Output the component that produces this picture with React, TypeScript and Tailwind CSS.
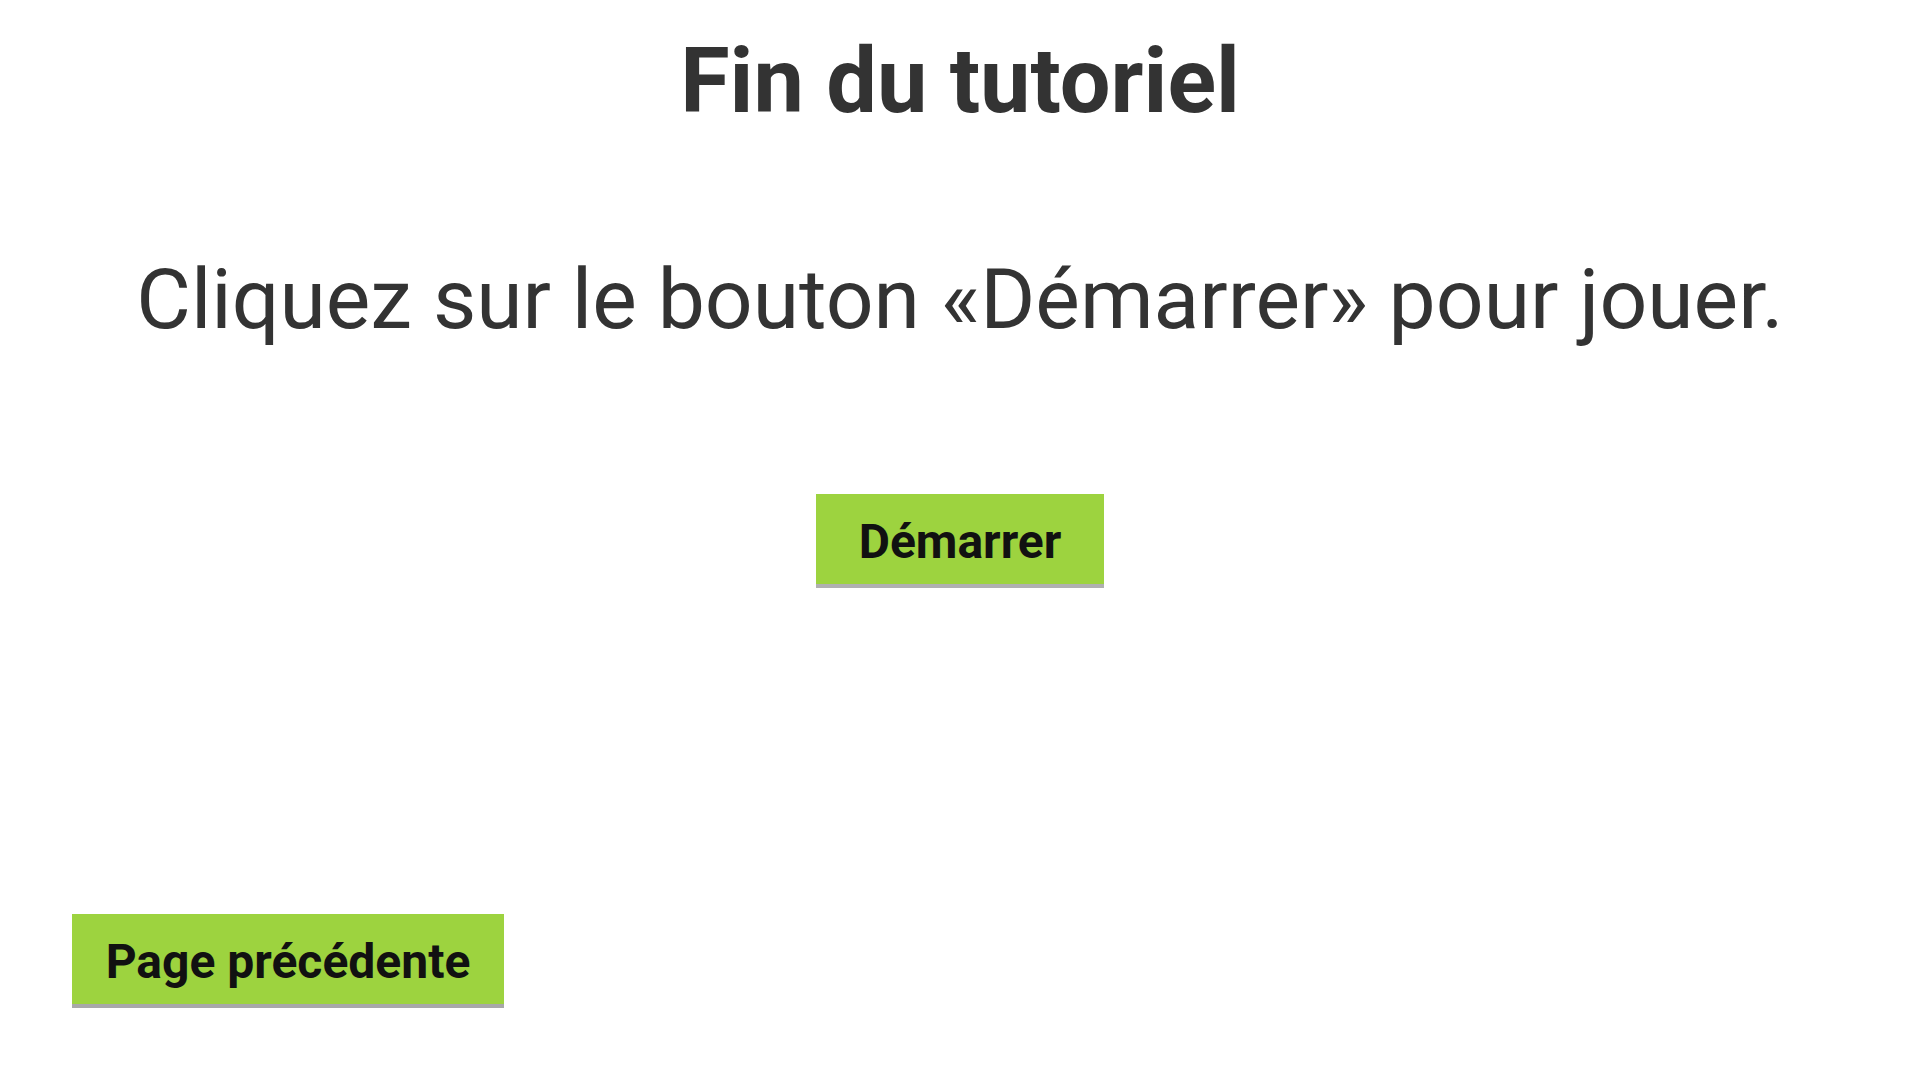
const App = () => {
    return (
        <div className="min-h-screen w-full bg-white font-['Roboto',sans-serif] text-[#333333] flex flex-col">
            <h1 className="pt-[37px] text-center text-[90px] font-bold leading-none">Fin du tutoriel</h1>

            <p className="mt-[131px] text-center text-[84px] leading-none">
                Cliquez sur le bouton «Démarrer» pour jouer.
            </p>

            <div className="mt-[152px] flex justify-center">
                <button
                    type="button"
                    className="w-[288px] h-[94px] pt-[5px] bg-[#9dd33f] border-b-4 border-[#b0b0b0] text-[48px] font-bold text-[#111111] leading-none"
                >Démarrer</button>
            </div>

            <div className="mt-[326px] pl-[72px]">
                <button
                    type="button"
                    className="w-[432px] h-[94px] pt-[5px] bg-[#9dd33f] border-b-4 border-[#a8a8a8] text-[48px] font-bold text-[#111111] leading-none"
                >Page précédente</button>
            </div>
        </div>
    )
}

export default App
